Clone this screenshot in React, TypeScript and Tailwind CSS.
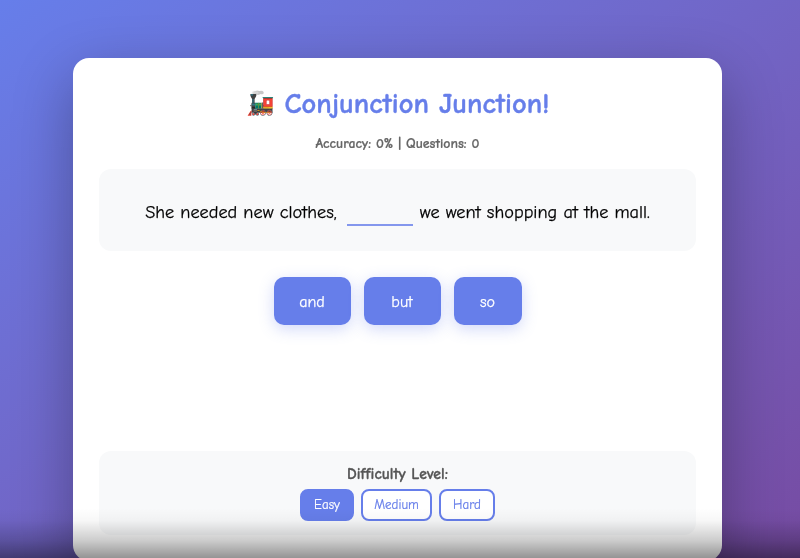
export default function App() {
  return (
    <div className="relative h-[558px] overflow-hidden bg-gradient-to-br from-[#667eea] to-[#764ba2] font-['Comic_Sans_MS','Comic_Neue','Lato',sans-serif] blur-[0.4px]">
      <div className="flex justify-center pt-[58px]">
        <div className="ml-[-5px] flex h-[503px] w-[649px] flex-col items-center rounded-[16px] bg-white px-[26px] pt-[25px] shadow-[0_20px_60px_rgba(0,0,0,0.3)]">
          <h1 className="flex h-[42px] items-center text-[28.4px] leading-[42px] font-bold text-[#667eea] [-webkit-text-stroke:0.4px_#667eea]">
            <span className="mr-[10px] text-[23px] [-webkit-text-stroke:0]">🚂</span>
            Conjunction Junction!
          </h1>
          <p className="mt-[10px] h-[18px] text-[13.8px] leading-[18px] font-bold text-[#666] [-webkit-text-stroke:0.2px_#666]">Accuracy: 0% | Questions: 0</p>
          <div className="mt-[16px] flex h-[82px] w-full items-center justify-center rounded-[12px] bg-[#f8f9fa] pt-[5px] text-[18.3px] text-black [-webkit-text-stroke:0.25px_#000]">
            She needed new clothes,
            <span className="mt-[8px] mr-[7px] ml-[10px] inline-block h-[18px] w-[66px] border-b-2 border-[#667eea] opacity-80"></span>
            we went shopping at the mall.
          </div>
          <div className="mt-[26px] flex gap-[13px]">
            <button className="h-[48px] w-[77px] rounded-[10px] bg-[#667eea] pt-[2px] text-[16px] text-white shadow-[0_4px_15px_rgba(102,126,234,0.3)] [-webkit-text-stroke:0.25px_#fff]">and</button>
            <button className="h-[48px] w-[77px] rounded-[10px] bg-[#667eea] pt-[2px] text-[16px] text-white shadow-[0_4px_15px_rgba(102,126,234,0.3)] [-webkit-text-stroke:0.25px_#fff]">but</button>
            <button className="h-[48px] w-[68px] rounded-[10px] bg-[#667eea] pt-[2px] text-[16px] text-white shadow-[0_4px_15px_rgba(102,126,234,0.3)] [-webkit-text-stroke:0.25px_#fff]">so</button>
          </div>
          <div className="mt-[126px] flex h-[84px] w-full flex-col items-center rounded-[12px] bg-[#f8f9fa] pt-[13px]">
            <p className="h-[20px] text-[15.6px] leading-[20px] font-bold text-[#555] [-webkit-text-stroke:0.3px_#555]">Difficulty Level:</p>
            <div className="mt-[5px] flex gap-[7px]">
              <button className="h-[32px] w-[54px] rounded-[8px] border-2 border-[#667eea] bg-[#667eea] text-[13px] text-white [-webkit-text-stroke:0.2px_#fff]">Easy</button>
              <button className="h-[32px] w-[71px] rounded-[8px] border-2 border-[#667eea] bg-white text-[13px] text-[#667eea] [-webkit-text-stroke:0.2px_#667eea]">Medium</button>
              <button className="h-[32px] w-[56px] rounded-[8px] border-2 border-[#667eea] bg-white text-[13px] text-[#667eea] [-webkit-text-stroke:0.2px_#667eea]">Hard</button>
            </div>
          </div>
        </div>
      </div>
      <div className="absolute inset-x-0 bottom-0 h-[50px] bg-[linear-gradient(to_bottom,rgba(0,0,0,0)_0%,rgba(0,0,0,0.03)_25%,rgba(0,0,0,0.2)_65%,rgba(0,0,0,0.42)_100%)]"></div>
    </div>
  )
}
